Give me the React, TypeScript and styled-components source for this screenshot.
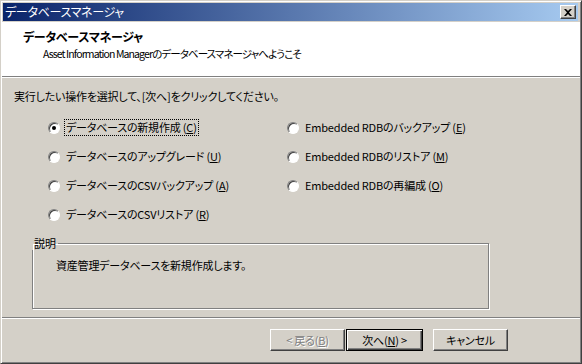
import * as React from 'react';
import styled, { createGlobalStyle, css } from 'styled-components';

const face = '#d4d0c8';
const shadow = '#808080';
const darkShadow = '#404040';

const GlobalStyle = createGlobalStyle`
  html, body {
    margin: 0;
    padding: 0;
    background: ${face};
  }
  body {
    font-family: "Noto Sans CJK JP", "Liberation Sans", sans-serif;
    font-size: 11px;
    font-feature-settings: "palt";
    color: #000;
  }
`;

const Window = styled.div`
  box-sizing: border-box;
  width: 582px;
  height: 364px;
  display: flex;
  flex-direction: column;
  background: ${face};
  border-top: 1px solid ${face};
  border-left: 1px solid ${face};
  border-right: 1px solid ${darkShadow};
  border-bottom: 1px solid ${darkShadow};
  box-shadow: inset 1px 1px #fff, inset -1px -1px ${shadow};
  padding: 2px 3px 3px 2px;
`;

const TitleBar = styled.div`
  height: 18px;
  display: flex;
  align-items: center;
  justify-content: space-between;
  padding: 0 2px 0 2px;
  background: linear-gradient(to right, #0a246a, #a6caf0);
  color: #fff;
  line-height: 18px;
`;

const TitleText = styled.span`
  font-size: 12px;
  letter-spacing: -0.3px;
`;

const CloseButton = styled.div`
  box-sizing: border-box;
  width: 16px;
  height: 14px;
  background: ${face};
  border-top: 1px solid #fff;
  border-left: 1px solid #fff;
  border-right: 1px solid ${darkShadow};
  border-bottom: 1px solid ${darkShadow};
  box-shadow: inset -1px -1px ${shadow};
  display: flex;
  align-items: center;
  justify-content: center;
`;

const Header = styled.div`
  height: 55px;
  margin: 1px -2px 0 -1px;
  background: #fff;
  border-bottom: 1px solid ${shadow};
  box-shadow: 0 1px #fff;
  padding: 7px 0 0 21px;
  box-sizing: border-box;
`;

const HeaderTitle = styled.div`
  font-weight: bold;
  font-size: 12px;
  line-height: 16px;
  letter-spacing: -0.3px;
`;

const HeaderSub = styled.div`
  padding-left: 20px;
  line-height: 17px;
  font-size: 10.5px;
  letter-spacing: -0.9px;
`;

const Content = styled.div`
  flex: 1;
  display: flex;
  flex-direction: column;
  padding: 11px 0 0 11px;
`;

const Instruction = styled.div`
  line-height: 16px;
  letter-spacing: -0.2px;
`;

const Options = styled.div`
  display: grid;
  grid-template-columns: 239px 1fr;
  grid-auto-rows: 29px;
  padding: 9px 0 0 34px;
`;

const Option = styled.label`
  display: flex;
  align-items: center;
  gap: 3px;
  letter-spacing: -0.2px;
`;

const Radio = styled.span<{ $checked?: boolean }>`
  box-sizing: border-box;
  width: 12px;
  height: 12px;
  border-radius: 50%;
  background: #fff;
  border: 1px solid;
  border-color: ${shadow} #fff #fff ${shadow};
  box-shadow: inset 1px 1px ${darkShadow};
  display: flex;
  align-items: center;
  justify-content: center;
  margin-right: 2px;
  ${p =>
    p.$checked &&
    css`
      &::after {
        content: '';
        width: 4px;
        height: 4px;
        border-radius: 50%;
        background: #000;
      }
    `}
`;

const OptionLabel = styled.span<{ $focused?: boolean }>`
  padding: 0 1px;
  line-height: 15px;
  outline: ${p => (p.$focused ? '1px dotted #000' : 'none')};
`;

const GroupBox = styled.fieldset`
  margin: 7px 89px 0 18px;
  height: 73px;
  box-sizing: border-box;
  border: 1px solid ${shadow};
  box-shadow: inset 1px 1px #fff, 1px 1px #fff;
  padding: 1px 0 0 23px;
`;

const Legend = styled.legend`
  padding: 0 2px 0 2px;
  margin-left: -24px;
  line-height: 14px;
`;

const GroupText = styled.div`
  letter-spacing: -0.2px;
  line-height: 16px;
  margin-top: 6px;
`;

const Separator = styled.div`
  margin: 0 -2px 0 -1px;
  height: 1px;
  background: ${shadow};
  border-bottom: 1px solid #fff;
`;

const ButtonRow = styled.div`
  height: 41px;
  display: flex;
  justify-content: flex-end;
  align-items: flex-start;
  padding: 10px 70px 0 0;
  box-sizing: border-box;
`;

const Button = styled.button<{ $default?: boolean; $disabled?: boolean }>`
  box-sizing: border-box;
  width: 75px;
  height: 22px;
  margin-left: ${p => (p.$default ? '1px' : '10px')};
  padding: 0;
  background: ${face};
  font: inherit;
  font-size: 11px;
  letter-spacing: -0.2px;
  border-top: 1px solid #fff;
  border-left: 1px solid #fff;
  border-right: 1px solid ${darkShadow};
  border-bottom: 1px solid ${darkShadow};
  box-shadow: inset -1px -1px ${shadow};
  color: ${p => (p.$disabled ? shadow : '#000')};
  text-shadow: ${p => (p.$disabled ? '1px 1px #fff' : 'none')};
  ${p =>
    p.$default &&
    css`
      width: 77px;
      border: 1px solid #000;
      box-shadow: inset 1px 1px #fff, inset -1px -1px ${darkShadow},
        inset -2px -2px ${shadow};
    `}
  &:first-child {
    margin-left: 0;
  }
`;

const CloseIcon = () => (
  <svg width="8" height="7" viewBox="0 0 8 7">
    <path d="M0 0h2l2 2 2-2h2L5 3.5 8 7H6L4 5 2 7H0l3-3.5z" fill="#000" />
  </svg>
);

type Opt = { text: string; key: string };

const leftOptions: Opt[] = [
  { text: 'データベースの新規作成', key: 'C' },
  { text: 'データベースのアップグレード', key: 'U' },
  { text: 'データベースのCSVバックアップ', key: 'A' },
  { text: 'データベースのCSVリストア', key: 'R' },
];

const rightOptions: Opt[] = [
  { text: 'Embedded RDBのバックアップ', key: 'E' },
  { text: 'Embedded RDBのリストア', key: 'M' },
  { text: 'Embedded RDBの再編成', key: 'O' },
];

export default function App() {
  const [selected, setSelected] = React.useState('C');

  const rows: React.ReactNode[] = [];
  leftOptions.forEach((opt, i) => {
    const right = rightOptions[i];
    [opt, right].forEach((o, col) => {
      if (!o) {
        rows.push(<span key={`empty.${i}.${col}`} />);
        return;
      }
      const checked = selected === o.key;
      rows.push(
        <Option key={o.key} onClick={() => setSelected(o.key)}>
          <Radio $checked={checked} />
          <OptionLabel $focused={checked}>
            {o.text} (<u>{o.key}</u>)
          </OptionLabel>
        </Option>
      );
    });
  });

  return (
    <>
      <GlobalStyle />
      <Window>
        <TitleBar>
          <TitleText>データベースマネージャ</TitleText>
          <CloseButton>
            <CloseIcon />
          </CloseButton>
        </TitleBar>
        <Header>
          <HeaderTitle>データベースマネージャ</HeaderTitle>
          <HeaderSub>Asset Information Managerのデータベースマネージャへようこそ</HeaderSub>
        </Header>
        <Content>
          <Instruction>実行したい操作を選択して、[次へ]をクリックしてください。</Instruction>
          <Options>{rows}</Options>
          <GroupBox>
            <Legend>説明</Legend>
            <GroupText>資産管理データベースを新規作成します。</GroupText>
          </GroupBox>
        </Content>
        <Separator />
        <ButtonRow>
          <Button $disabled disabled>
            &lt; 戻る(<u>B</u>)
          </Button>
          <Button $default>
            次へ(<u>N</u>) &gt;
          </Button>
          <Button>キャンセル</Button>
        </ButtonRow>
      </Window>
    </>
  );
}
